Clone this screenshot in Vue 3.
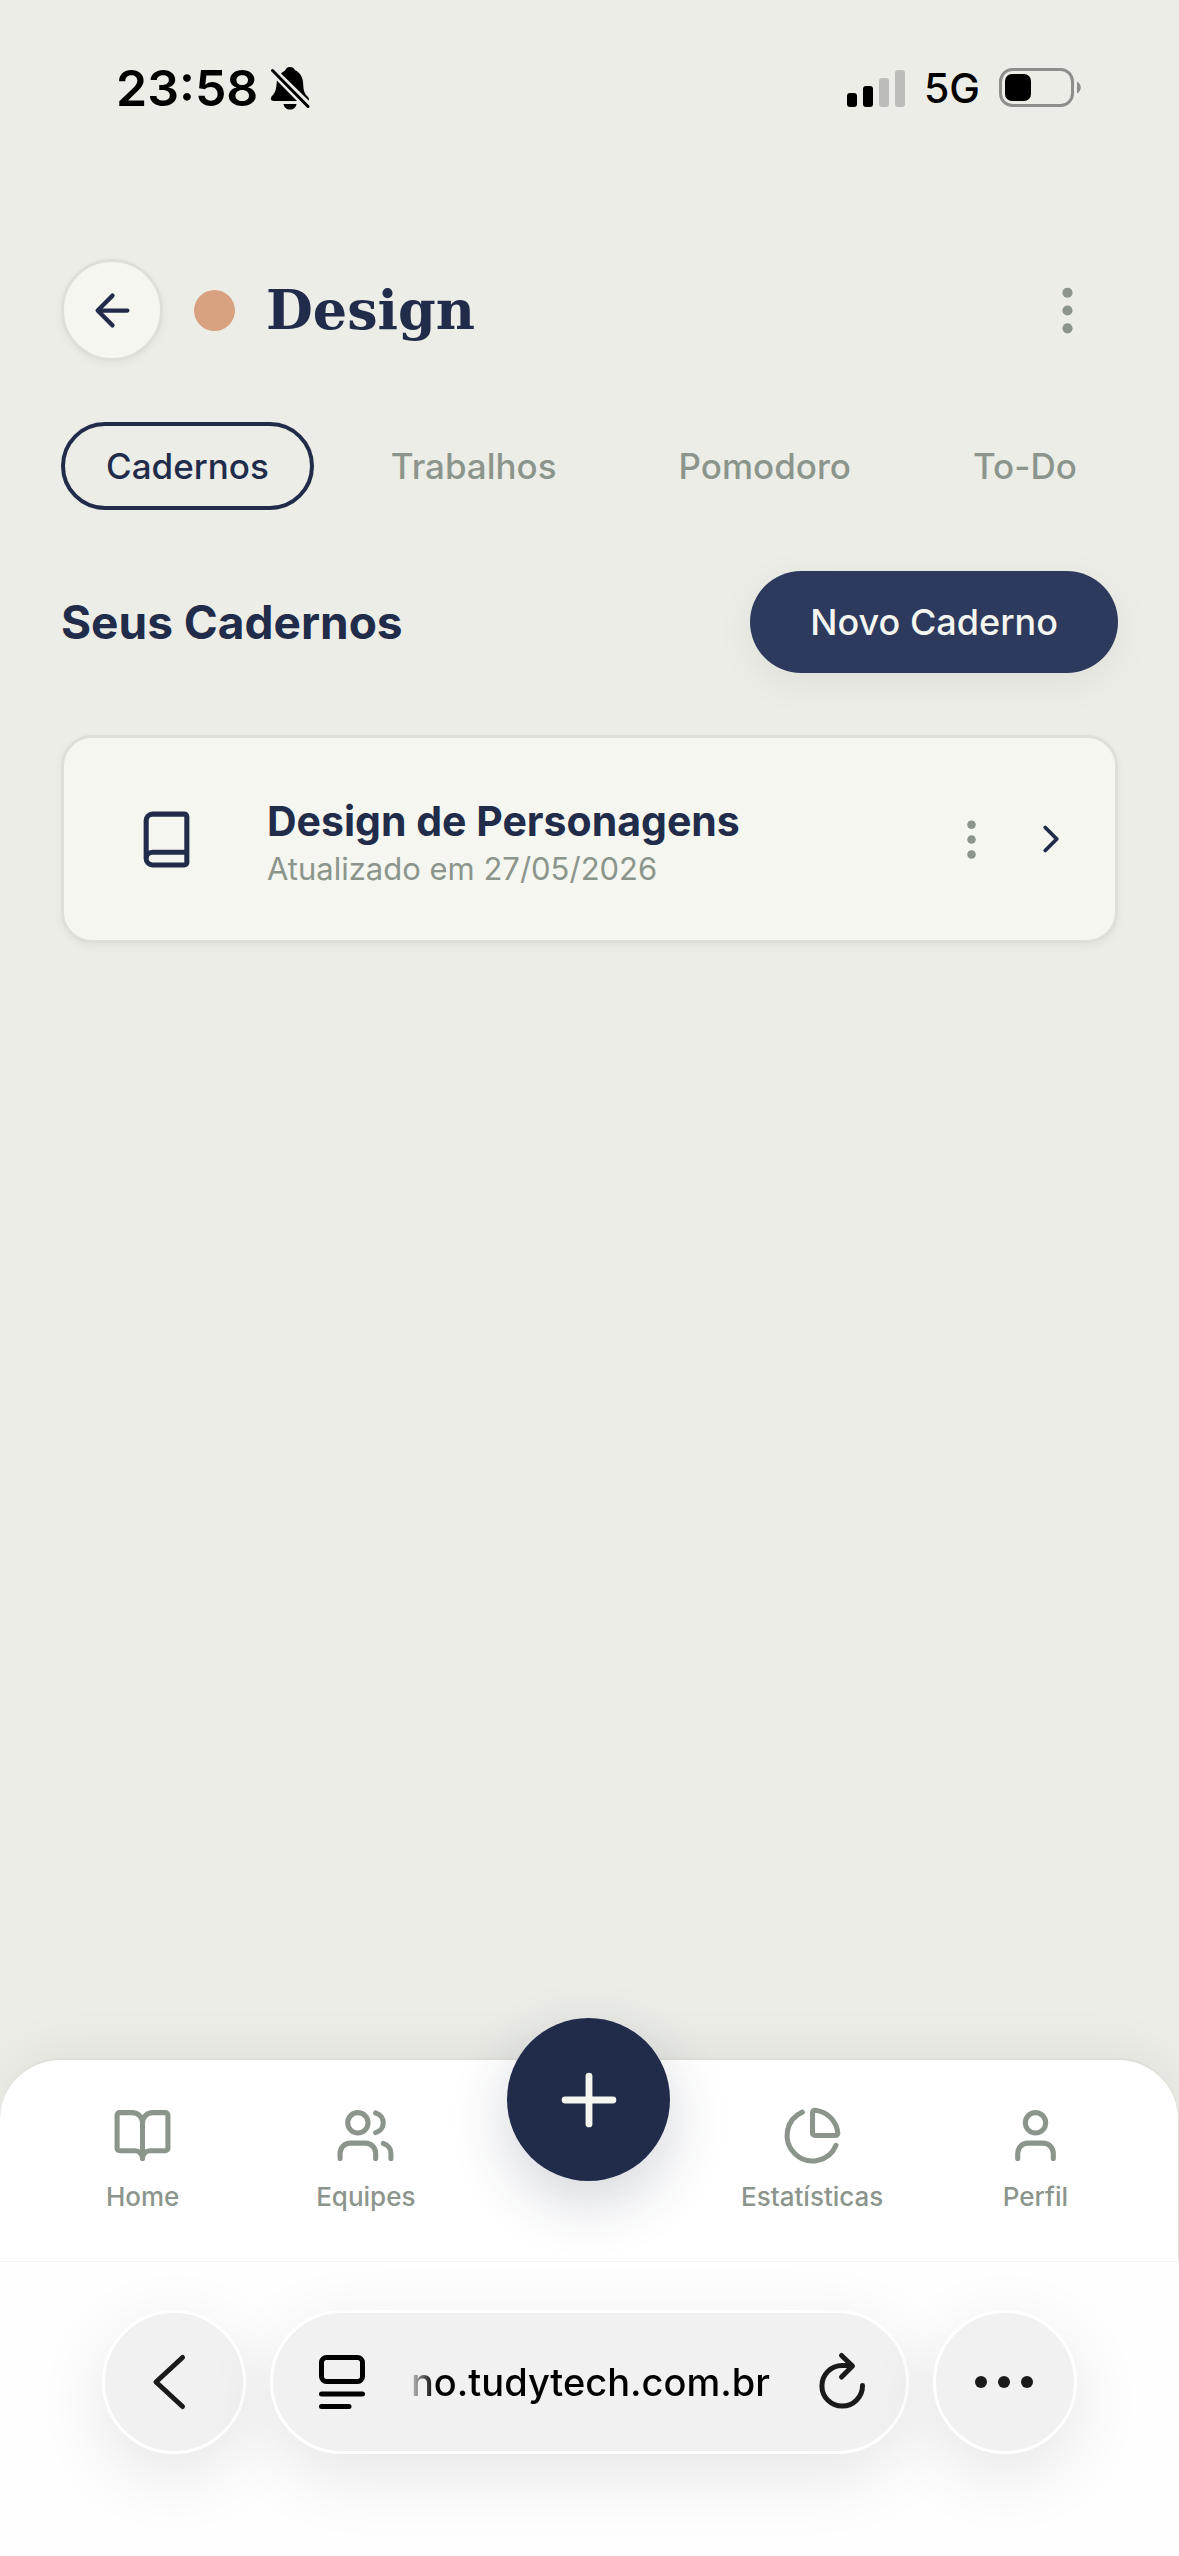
<script setup>
import { ref } from 'vue'

const tabs = ['Cadernos', 'Trabalhos', 'Pomodoro', 'To-Do']
const activeTab = ref('Cadernos')
const address = ref('no.tudytech.com.br')
const notebooks = [{ id: 1, title: 'Design de Personagens', updated: '27/05/2026' }]
</script>

<template>
  <div class="screen">
    <div class="status">
      <div class="status-group">
        <span class="clock">23:58</span>
        <svg class="bell" viewBox="0 0 40 44" aria-hidden="true">
          <path d="M11 7.500 C13 5.500 14.500 5 15.500 4 C16 2 17.500 1 20 1 C22.500 1 24 2 24.800 4 C30 6.500 33 11 33.200 18 C33.400 25 34.500 27.500 38 31 C39 32 39.300 33.500 38.600 34.500 Z" />
          <path d="M6.800 14.500 L27 35 H4 C.5 35 0 32 2 30 C5.500 26.500 6.500 23 6.800 14.500 Z" />
          <path d="M13.500 38 H26.500 C26 41.500 23.500 43.500 20 43.500 C16.500 43.500 14 41.500 13.500 38 Z" />
          <path class="slash" d="M2.500 4.500 L38 40.500" />
        </svg>
      </div>
      <div class="status-group right">
        <svg class="signal" viewBox="0 0 58 38" aria-hidden="true">
          <rect x="0" y="24" width="10" height="14" rx="3" />
          <rect x="16" y="17" width="10" height="21" rx="3" />
          <rect class="off" x="32" y="9" width="10" height="29" rx="3" />
          <rect class="off" x="48" y="1" width="10" height="37" rx="3" />
        </svg>
        <span class="network">5G</span>
        <svg class="battery" viewBox="0 0 83 40" aria-hidden="true">
          <rect x="1.500" y="1.500" width="72" height="36" rx="12" fill="none" stroke="#8e8f8b" stroke-width="3" />
          <rect x="6" y="6" width="26" height="27" rx="7" />
          <path d="M78 13.500 C83 16 83 23 78 25.500 Z" fill="#8e8f8b" />
        </svg>
      </div>
    </div>

    <main class="content">
      <header class="topbar">
        <button class="back" type="button" aria-label="Voltar">
          <svg class="icon-m line" viewBox="0 0 24 24"><path d="m12 19-7-7 7-7M19 12H5" /></svg>
        </button>
        <span class="subject-dot"></span>
        <h1>Design</h1>
        <button class="plain menu" type="button" aria-label="Mais opções">
          <svg class="icon-l dots" viewBox="0 0 24 24"><circle cx="12" cy="5" r="2" /><circle cx="12" cy="12" r="2" /><circle cx="12" cy="19" r="2" /></svg>
        </button>
      </header>

      <div class="tabs" role="tablist">
        <button
          v-for="tab in tabs"
          :key="tab"
          type="button"
          role="tab"
          class="tab"
          :class="{ active: tab === activeTab }"
          :aria-selected="tab === activeTab"
          @click="activeTab = tab"
        >{{ tab }}</button>
      </div>

      <div class="section-head">
        <h2>Seus Cadernos</h2>
        <button class="primary" type="button">Novo Caderno</button>
      </div>

      <article v-for="book in notebooks" :key="book.id" class="card">
        <svg class="icon-l line" viewBox="0 0 24 24" aria-hidden="true">
          <path d="M4 19.500v-15A2.500 2.500 0 0 1 6.500 2H19a1 1 0 0 1 1 1v18a1 1 0 0 1-1 1H6.500a1 1 0 0 1 0-5H20" />
        </svg>
        <div class="card-text">
          <h3>{{ book.title }}</h3>
          <p>Atualizado em {{ book.updated }}</p>
        </div>
        <button class="plain" type="button" aria-label="Opções do caderno">
          <svg class="icon-m dots" viewBox="0 0 24 24"><circle cx="12" cy="5" r="2" /><circle cx="12" cy="12" r="2" /><circle cx="12" cy="19" r="2" /></svg>
        </button>
        <a class="open" href="#caderno" aria-label="Abrir caderno">
          <svg class="icon-s line" viewBox="0 0 24 24"><path d="m9 18 6-6-6-6" /></svg>
        </a>
      </article>
    </main>

    <nav class="tabbar">
      <a href="#home">
        <svg class="icon-l line" viewBox="0 0 24 24"><path d="M12 7v14M3 18a1 1 0 0 1-1-1V4a1 1 0 0 1 1-1h5a4 4 0 0 1 4 4 4 4 0 0 1 4-4h5a1 1 0 0 1 1 1v13a1 1 0 0 1-1 1h-6a3 3 0 0 0-3 3 3 3 0 0 0-3-3z" /></svg>
        <span>Home</span>
      </a>
      <a href="#equipes">
        <svg class="icon-l line" viewBox="0 0 24 24"><path d="M16 21v-2a4 4 0 0 0-4-4H6a4 4 0 0 0-4 4v2M16 3.128a4 4 0 0 1 0 7.744M22 21v-2a4 4 0 0 0-3-3.870" /><circle cx="9" cy="7" r="4" /></svg>
        <span>Equipes</span>
      </a>
      <button class="fab" type="button" aria-label="Adicionar">
        <svg class="line" viewBox="0 0 24 24"><path d="M5 12h14M12 5v14" /></svg>
      </button>
      <a href="#estatisticas">
        <svg class="icon-l line" viewBox="0 0 24 24"><path d="M21 12c.552 0 1.005-.449.950-.998a10 10 0 0 0-8.953-8.951c-.550-.055-.998.398-.998.950v8a1 1 0 0 0 1 1z" /><path d="M21.210 15.890A10 10 0 1 1 8 2.830" /></svg>
        <span>Estatísticas</span>
      </a>
      <a href="#perfil">
        <svg class="icon-l line" viewBox="0 0 24 24"><path d="M19 21v-2a4 4 0 0 0-4-4H9a4 4 0 0 0-4 4v2" /><circle cx="12" cy="7" r="4" /></svg>
        <span>Perfil</span>
      </a>
    </nav>

    <footer class="browser">
      <button class="glass round" type="button" aria-label="Página anterior">
        <svg viewBox="0 0 60 60"><path d="M38.500 5.500 L12 30 L38.500 54.500" class="stroke" /></svg>
      </button>
      <div class="glass field">
        <svg class="reader" viewBox="0 0 46 56" aria-hidden="true">
          <rect x="2.500" y="3.500" width="41" height="24" rx="5" />
          <path d="M2.500 40H43.500M2.500 52.500H30" />
        </svg>
        <input v-model="address" type="text" aria-label="Endereço" />
        <button class="plain" type="button" aria-label="Recarregar">
          <svg class="reload" viewBox="0 0 46 56"><path d="M43.500 31.500 A20.300 20.300 0 1 1 23.200 11.500 H32.500M22.500 1.500 L33.500 12 L22.500 23" class="stroke" /></svg>
        </button>
      </div>
      <button class="glass round" type="button" aria-label="Mais">
        <svg viewBox="0 0 60 60"><circle cx="6" cy="30" r="6" /><circle cx="29" cy="30" r="6" /><circle cx="52" cy="30" r="6" /></svg>
      </button>
    </footer>
  </div>
</template>

<style>
body {
  margin: 0;
  background: #ecede7;
}
</style>

<style scoped>
.screen {
  --navy: #212c4b;
  --muted: #8c958c;
  --paper: #f5f6f0;
  --edge: #dedfd8;
  display: flex;
  flex-direction: column;
  min-height: 100vh;
  overflow: hidden;
  background: #ecede7;
  color: var(--navy);
  font-family: Inter, "Liberation Sans", sans-serif;
}
*,
*::before {
  box-sizing: border-box;
}
svg {
  display: block;
  flex: none;
}
button,
input {
  font: inherit;
  color: inherit;
  border: 0;
  padding: 0;
  background: none;
}
h1,
h2,
h3,
p {
  margin: 0;
}
.icon-s { width: 46px; height: 46px; }
.icon-m { width: 51px; height: 51px; }
.icon-l { width: 61px; height: 61px; }
.line {
  fill: none;
  stroke: currentColor;
  stroke-width: 2;
  stroke-linecap: round;
  stroke-linejoin: round;
}
.dots {
  fill: var(--muted);
}

/* status bar */
.status {
  display: flex;
  justify-content: space-between;
  align-items: center;
  height: 176px;
  padding: 0 97px 0 116px;
  color: #000;
}
.status-group {
  display: flex;
  align-items: center;
  gap: 12px;
}
.status-group.right {
  gap: 19px;
}
.clock {
  font-size: 50px;
  font-weight: 600;
}
.network {
  font-size: 41px;
  font-weight: 500;
}
.bell { width: 40px; height: 44px; }
.slash {
  fill: none;
  stroke: #000;
  stroke-width: 3;
  stroke-linecap: round;
}
.signal { width: 58px; height: 38px; }
.off { fill: #bcbdb8; }
.battery { width: 83px; height: 40px; }

/* page */
.content {
  flex: 1;
  padding: 83px 61px 61px;
}
.topbar {
  display: flex;
  align-items: center;
  gap: 31px;
  height: 102px;
}
.back {
  display: flex;
  align-items: center;
  justify-content: center;
  width: 102px;
  height: 102px;
  border: 3px solid var(--edge);
  border-radius: 50%;
  background: var(--paper);
  box-shadow: 0 3px 8px rgba(0, 0, 0, 0.05);
}
.subject-dot {
  width: 41px;
  height: 41px;
  border-radius: 50%;
  background: #d8a180;
}
h1 {
  font-family: "DejaVu Serif", serif;
  font-size: 54px;
  font-weight: 700;
  line-height: 80px;
}
.menu {
  margin-left: auto;
  padding: 20px;
}
.tabs {
  display: flex;
  gap: 32px;
  margin-top: 61px;
}
.tab {
  height: 88px;
  padding: 0 41px;
  border: 4px solid transparent;
  border-radius: 44px;
  color: var(--muted);
  font-size: 35px;
  font-weight: 500;
  white-space: nowrap;
}
.tab.active {
  border-color: var(--navy);
  color: var(--navy);
}
.section-head {
  display: flex;
  align-items: center;
  justify-content: space-between;
  margin-top: 61px;
}
h2 {
  font-size: 46px;
  font-weight: 700;
}
.primary {
  height: 102px;
  padding: 0 60px;
  border-radius: 51px;
  background: #2d3a5e;
  color: var(--paper);
  font-size: 36px;
  font-weight: 500;
  box-shadow: 0 10px 40px rgba(0, 0, 0, 0.06);
}
.card {
  display: flex;
  align-items: center;
  height: 208px;
  margin-top: 62px;
  padding: 0 41px 0 72px;
  border: 3px solid var(--edge);
  border-radius: 31px;
  background: var(--paper);
  box-shadow: 0 3px 10px rgba(0, 0, 0, 0.05);
}
.card-text {
  flex: 1;
  margin-left: 70px;
  padding-top: 8px;
}
h3 {
  font-size: 41px;
  font-weight: 700;
  line-height: 52px;
}
.card p {
  color: var(--muted);
  font-size: 31px;
  line-height: 44px;
}
.open {
  margin-left: 31px;
  color: var(--navy);
}

/* app navigation */
.tabbar {
  position: relative;
  display: grid;
  grid-template-columns: repeat(5, 1fr);
  align-items: start;
  height: 203px;
  padding: 45px 31px 0;
  border: solid var(--edge);
  border-width: 2px 1px 0 0;
  border-radius: 61px 61px 0 0;
  background: #fff;
  box-shadow: 0 -10px 50px rgba(0, 0, 0, 0.05);
}
.tabbar a {
  display: flex;
  flex-direction: column;
  align-items: center;
  gap: 15px;
  color: var(--muted);
  font-size: 26px;
  font-weight: 500;
  line-height: 31px;
  text-decoration: none;
}
.fab {
  display: flex;
  align-items: center;
  justify-content: center;
  justify-self: center;
  width: 163px;
  height: 163px;
  margin-top: -87px;
  border-radius: 50%;
  background: var(--navy);
  color: var(--paper);
  box-shadow: 0 20px 60px rgba(33, 44, 75, 0.2);
}
.fab svg {
  width: 82px;
  height: 82px;
}

/* browser toolbar */
.browser {
  position: relative;
  display: flex;
  gap: 24px;
  padding: 48px 102px 102px;
  border-top: 1px solid #f4f4f4;
  background: #fefefe;
  color: #000;
}
.glass {
  display: flex;
  align-items: center;
  height: 144px;
  border: 3px solid #fff;
  border-radius: 72px;
  background: #f1f1f1;
  box-shadow: 0 20px 70px rgba(0, 0, 0, 0.1);
}
.round {
  justify-content: center;
  width: 144px;
  flex: none;
}
.round svg {
  width: 60px;
  height: 60px;
  fill: #1a1a1a;
}
.browser .stroke {
  fill: none;
  stroke: #1a1a1a;
  stroke-width: 5;
  stroke-linecap: round;
  stroke-linejoin: round;
}
.field {
  flex: 1;
  min-width: 0;
  padding: 0 41px 0 46px;
}
.reader {
  width: 46px;
  height: 56px;
  fill: none;
  stroke: #000;
  stroke-width: 5;
  stroke-linecap: round;
}
.field input {
  flex: 1;
  min-width: 0;
  height: 60px;
  margin: 0 20px 0 46px;
  font-size: 38px;
  font-weight: 500;
  outline: none;
  mask-image: linear-gradient(to right, rgba(0, 0, 0, 0.2), #000 24px);
}
.reload { width: 46px; height: 56px; overflow: visible; }
</style>
